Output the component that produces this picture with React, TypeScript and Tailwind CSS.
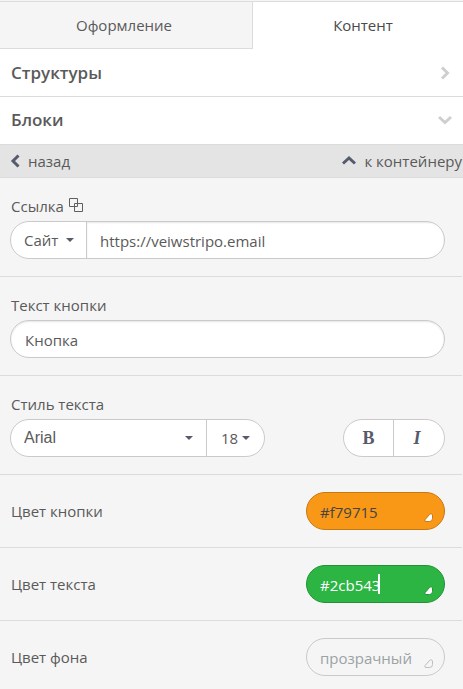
import { useState } from 'react'
import type { ReactNode } from 'react'

function Caret({ className = '' }: { className?: string }) {
  return (
    <svg viewBox="0 0 8 4" className={`pointer-events-none h-1 w-2 shrink-0 fill-[#555b6b] ${className}`} aria-hidden="true">
      <path d="M0 0h8L4 4z" />
    </svg>
  )
}

function Chevron({ points, className }: { points: string; className: string }) {
  return (
    <svg viewBox="0 0 14 14" className={`size-3.5 shrink-0 ${className}`} fill="none" stroke="currentColor" strokeWidth="3" aria-hidden="true">
      <polyline points={points} />
    </svg>
  )
}

function CopyIcon() {
  return (
    <svg viewBox="0 0 15 15" className="size-[15px]" fill="none" stroke="#5f5f5f" aria-hidden="true">
      <path d="M.5.5h8v8h-8zM5.5 5.5h8v8h-8z" />
    </svg>
  )
}

function Field({ label, htmlFor, action, children }: { label: string; htmlFor: string; action?: ReactNode; children: ReactNode }) {
  return (
    <section className="mr-px border-b border-[#dcdcdc] pt-4 pr-[17px] pb-[17px] pl-[10px]">
      <div className="mb-[3px] flex h-6 items-center gap-[5px] pl-px">
        <label htmlFor={htmlFor}>{label}</label>
        {action}
      </div>
      {children}
    </section>
  )
}

type ColorRowProps = {
  id: string
  label: string
  initial?: string
  placeholder?: string
  active?: boolean
  pill: string
  corner: string
}

function ColorRow({ id, label, initial = '', placeholder, active, pill, corner }: ColorRowProps) {
  const [value, setValue] = useState(initial)
  return (
    <section className="mr-px flex items-center justify-between border-b border-[#dcdcdc] py-[17px] pr-[17px] pl-[11px]">
      <label htmlFor={id}>{label}</label>
      <div className={`flex h-[38px] w-[139px] items-center rounded-full border pr-[11px] pl-[13px] ${pill}`}>
        <input
          id={id}
          value={value}
          placeholder={placeholder}
          onChange={(e) => setValue(e.target.value)}
          className="field-sizing-content max-w-24 bg-transparent pt-0.5 outline-none placeholder:text-[#9ba3a3]"
        />
        {active && <span className="-ml-0.5 h-5 w-0.5 bg-white" />}
        <svg viewBox="0 0 9 9" className={`mt-3 ml-auto size-[9px] shrink-0 ${corner}`} aria-hidden="true">
          <path d="M1.200 6.500 5.500 1.500Q8.500-.5 8.500 3V5.500Q8.500 8.500 5.500 8.500H2Q0 8.300 1.200 6.500z" />
        </svg>
      </div>
    </section>
  )
}

export default function App() {
  const [link, setLink] = useState('https://veiwstripo.email')
  const [text, setText] = useState('Кнопка')

  return (
    <div className="min-h-screen w-full bg-[#f5f5f5] pt-px font-['Open_Sans','Noto_Sans',sans-serif] text-[15px] leading-6 text-[#5a5a5a]">
      <nav className="grid h-12 grid-cols-[253fr_210fr] border-t border-[#dcdcdc]">
        <button className="border-r border-b border-[#dcdcdc] pr-1">Оформление</button>
        <button className="border-b border-white bg-white pl-2.5 text-[#4a4a4a]">Контент</button>
      </nav>

      <button className="flex h-12 w-full items-center justify-between border-b border-[#dcdcdc] bg-white px-[11px] text-[17px] font-semibold">
        Структуры
        <Chevron points="4,1.500 9.500,7 4,12.500" className="text-[#cfd0cd]" />
      </button>
      <button className="flex h-12 w-full items-center justify-between border-b border-[#dcdcdc] bg-white px-[11px] pb-0.5 text-[17px] font-semibold">
        Блоки
        <Chevron points="1,4 7,9.500 13,4" className="text-[#cfd0cd]" />
      </button>

      <div className="flex h-[33px] items-center justify-between border-b border-[#dcdcdc] bg-[#e4e4e4] pr-px pl-[9px]">
        <button className="flex items-center gap-[5px]">
          <Chevron points="9.500,1.500 4,7 9.500,12.500" className="text-[#555b6b]" />
          назад
        </button>
        <button className="flex items-center gap-2">
          <Chevron points="1,9.500 7,4 13,9.500" className="text-[#555b6b]" />
          к контейнеру
        </button>
      </div>

      <Field label="Ссылка" htmlFor="link" action={<button className="pb-0.5" aria-label="Копировать"><CopyIcon /></button>}>
        <div className="flex h-[38px] overflow-hidden rounded-full border border-[#cacaca] bg-white">
          <div className="relative flex w-[76px] shrink-0 items-center border-r border-[#cacaca]">
            <select aria-label="Тип ссылки" className="h-full w-full appearance-none pl-[13px] outline-none">
              <option>Сайт</option>
            </select>
            <Caret className="absolute right-3" />
          </div>
          <input
            id="link"
            value={link}
            onChange={(e) => setLink(e.target.value)}
            className="min-w-0 flex-1 px-[13px] pt-0.5 shadow-[inset_0_1px_2px_rgba(0,0,0,0.1)] outline-none"
          />
        </div>
      </Field>

      <Field label="Текст кнопки" htmlFor="text">
        <input
          id="text"
          value={text}
          onChange={(e) => setText(e.target.value)}
          className="block h-[38px] w-full rounded-full border border-[#cacaca] bg-white px-3.5 pt-0.5 shadow-[inset_0_1px_2px_rgba(0,0,0,0.1)] outline-none"
        />
      </Field>

      <Field label="Стиль текста" htmlFor="font">
        <div className="flex h-[38px] justify-between">
          <div className="flex w-[255px] overflow-hidden rounded-full border border-[#cacaca] bg-white">
            <div className="relative flex flex-1 items-center border-r border-[#cacaca]">
              <select id="font" className="h-full w-full appearance-none pl-[13px] font-['Liberation_Sans',sans-serif] text-base outline-none">
                <option>Arial</option>
              </select>
              <Caret className="absolute right-[13px]" />
            </div>
            <div className="relative flex w-[57px] items-center">
              <select aria-label="Размер текста" className="h-full w-full appearance-none pl-3.5 outline-none">
                <option>18</option>
              </select>
              <Caret className="absolute right-3.5" />
            </div>
          </div>
          <div className="grid w-[102px] grid-cols-2 overflow-hidden rounded-full border border-[#cacaca] bg-white font-['Liberation_Serif',serif] text-lg font-bold text-[#555b6b]">
            <button className="border-r border-[#cacaca]" aria-label="Полужирный">B</button>
            <button className="pr-1 italic" aria-label="Курсив">I</button>
          </div>
        </div>
      </Field>

      <ColorRow
        id="button-color"
        label="Цвет кнопки"
        initial="#f79715"
        pill="border-[#c67911] bg-[#f99816] text-[#444444]"
        corner="fill-white stroke-[#c67911]"
      />
      <ColorRow
        id="text-color"
        label="Цвет текста"
        initial="#2cb543"
        active
        pill="border-[#239136] bg-[#2cb543] text-white"
        corner="fill-white stroke-[#239136]"
      />
      <ColorRow
        id="background-color"
        label="Цвет фона"
        placeholder="прозрачный"
        pill="border-[#cacaca] text-[#9ba3a3]"
        corner="fill-[#f5f5f5] stroke-[#bdbdbd]"
      />
    </div>
  )
}
